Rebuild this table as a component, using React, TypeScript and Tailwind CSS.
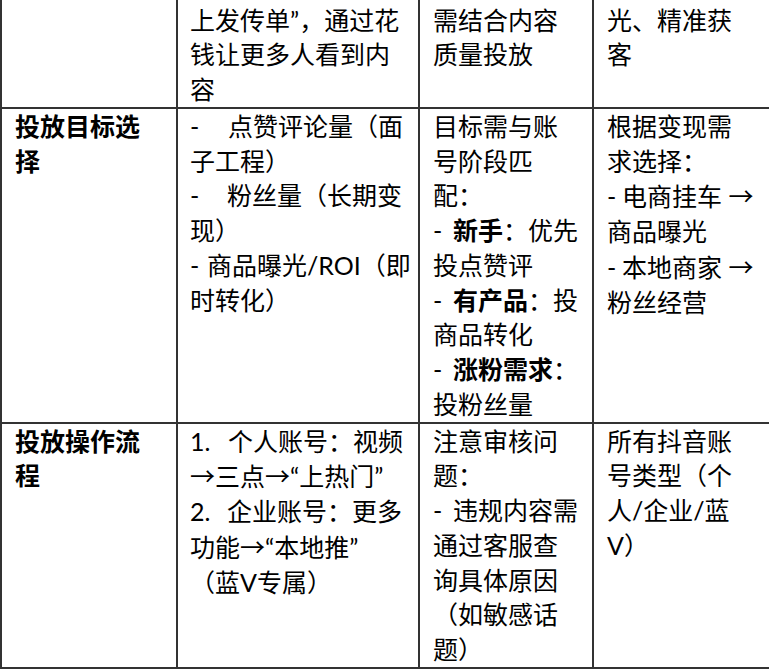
import React from 'react';

type Line = React.ReactNode;

interface CellProps {
  lines: Line[];
  bold?: boolean;
  first?: boolean;
  pad?: string;
  last?: boolean;
}

const Cell = ({ lines, bold, first, pad = 'pl-[13px]', last }: CellProps) => (
  <div
    className={`border-[#333] border-b-2 ${last ? '' : 'border-r-2'} ${pad} pr-1 ${first ? 'pt-[2.5px]' : ''} ${bold ? 'font-bold' : ''}`}
  >
    {lines.map((line, i) => (
      <div key={i} className="whitespace-nowrap">
        {line}
      </div>
    ))}
  </div>
);

// leading marker with a fixed width, like the justified gaps in the doc
const Lead = ({ w, children }: { w: string; children: React.ReactNode }) => (
  <span className={`inline-block ${w}`}>{children}</span>
);

// arrows come out wide in the doc, so take them from the CJK font
const Arrow = () => (
  <span className="inline-block w-[25px] font-['Noto_Sans_CJK_SC',sans-serif] font-normal">→</span>
);

const App = () => {
  return (
    <div className="w-[770px] h-[670px] overflow-hidden bg-white text-black">
      <div className="grid grid-cols-[176px_242px_174px_175px] border-l-2 border-[#333] font-['Lato','Noto_Sans_CJK_SC',sans-serif] text-[25px] leading-[34.75px]">
        {/* row 1 (continues from previous page) */}
        <Cell first lines={['']} />
        <Cell
          first
          pad="pl-3"
          lines={['上发传单”，通过花', '钱让更多人看到内', '容']}
        />
        <Cell first lines={['需结合内容', '质量投放']} />
        <Cell first last lines={['光、精准获', '客']} />

        {/* row 2 */}
        <Cell bold lines={['投放目标选', '择']} />
        <Cell
          pad="pl-3"
          lines={[
            <><Lead w="w-[38px]">-</Lead>点赞评论量（面</>,
            '子工程）',
            <><Lead w="w-[37px]">-</Lead>粉丝量（长期变</>,
            '现）',
            <><Lead w="w-[17px]">-</Lead>商品曝光/ROI（即</>,
            '时转化）',
          ]}
        />
        <Cell
          lines={[
            '目标需与账',
            '号阶段匹',
            '配：',
            <><Lead w="w-[20px]">-</Lead><b>新手</b>：优先</>,
            '投点赞评',
            <><Lead w="w-[20px]">-</Lead><b>有产品</b>：投</>,
            '商品转化',
            <><Lead w="w-[20px]">-</Lead><b>涨粉需求</b>：</>,
            '投粉丝量',
          ]}
        />
        <Cell
          last
          lines={[
            '根据变现需',
            '求选择：',
            <><Lead w="w-[15px]">-</Lead>电商挂车 <Arrow /></>,
            '商品曝光',
            <><Lead w="w-[15px]">-</Lead>本地商家 <Arrow /></>,
            '粉丝经营',
          ]}
        />

        {/* row 3 */}
        <Cell bold lines={['投放操作流', '程']} />
        <Cell
          pad="pl-3"
          lines={[
            <><Lead w="w-[38px]">1.</Lead>个人账号：视频</>,
            <><Arrow />三点<Arrow />“上热门”</>,
            <><Lead w="w-[37px]">2.</Lead>企业账号：更多</>,
            <>功能<Arrow />“本地推”</>,
            '（蓝V专属）',
          ]}
        />
        <Cell
          lines={[
            '注意审核问',
            '题：',
            <><Lead w="w-[20px]">-</Lead>违规内容需</>,
            '通过客服查',
            '询具体原因',
            '（如敏感话',
            '题）',
          ]}
        />
        <Cell
          last
          lines={['所有抖音账', '号类型（个', '人/企业/蓝', 'V）']}
        />
      </div>
    </div>
  );
};

export default App;
